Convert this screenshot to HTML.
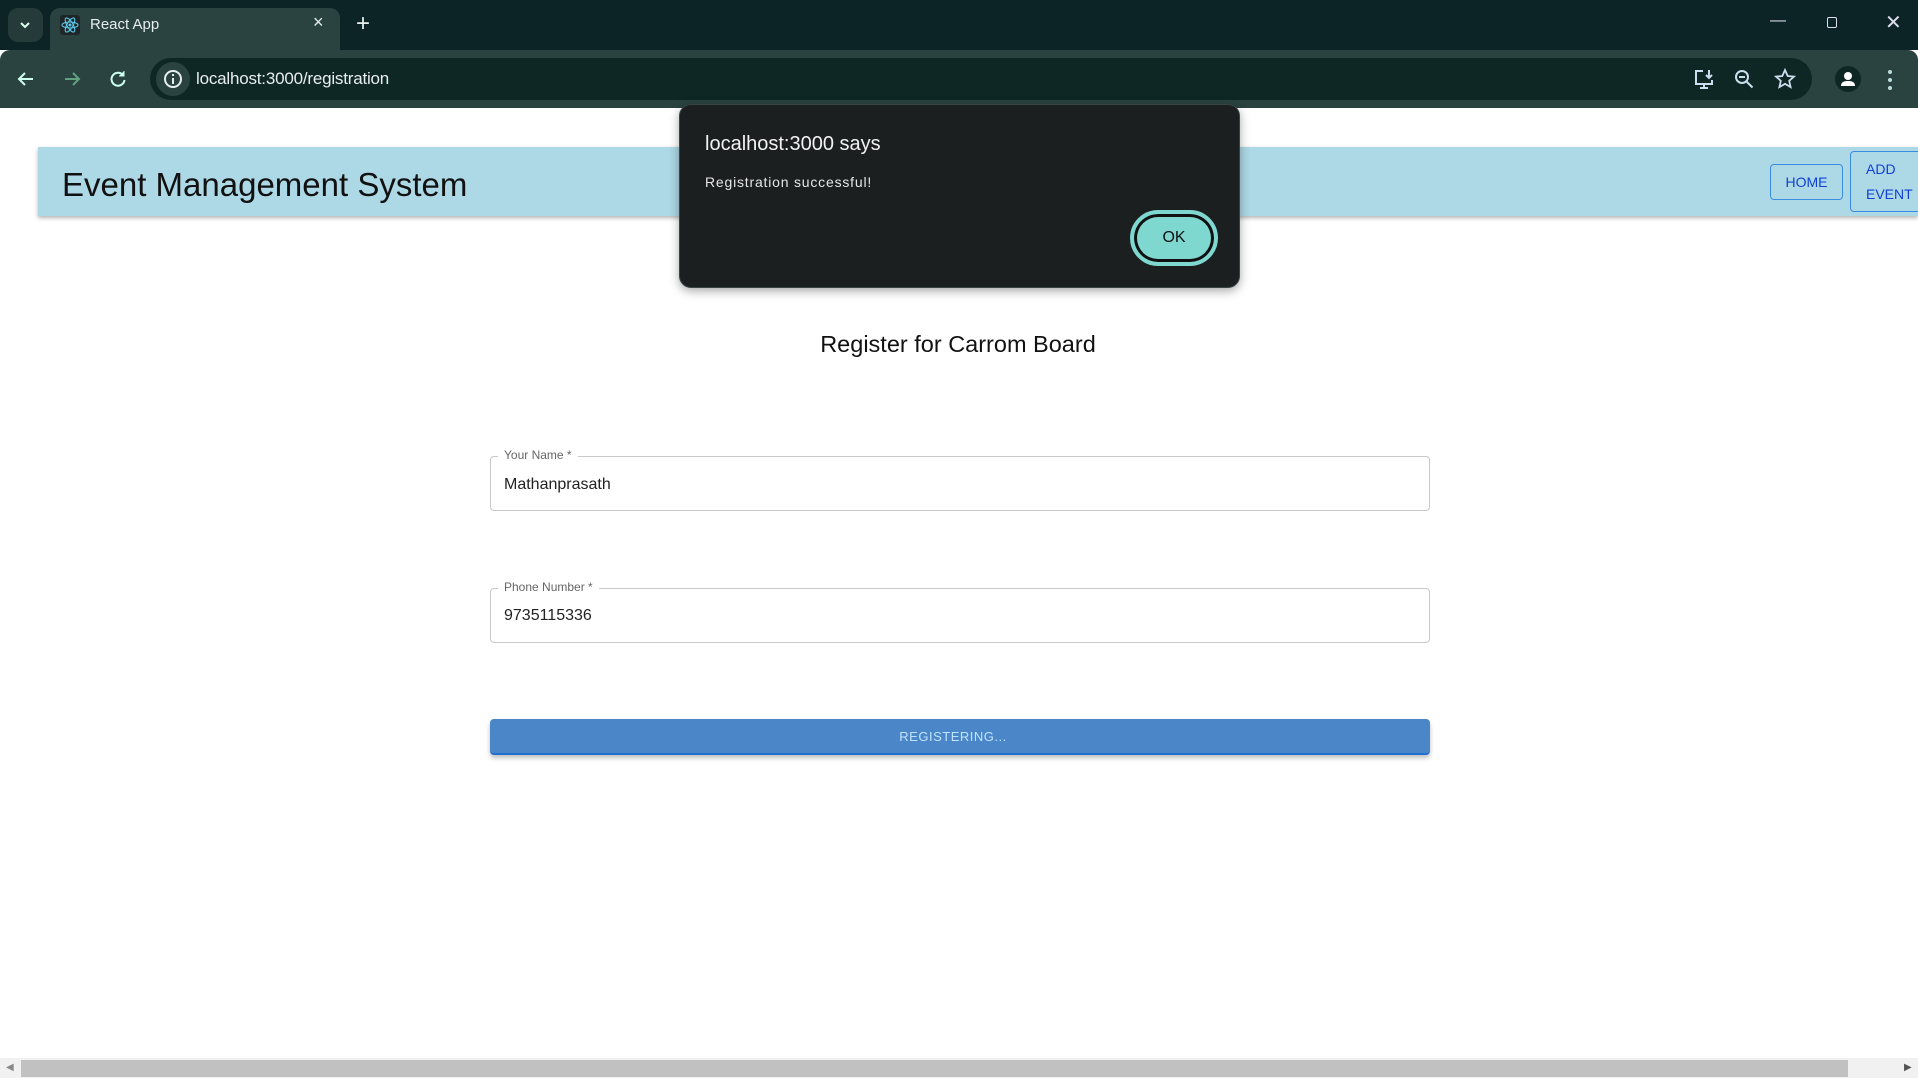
<!DOCTYPE html>
<html><head><meta charset="utf-8"><style>
*{box-sizing:border-box;margin:0;padding:0}
body{width:1918px;height:1078px;overflow:hidden;background:#fff;font-family:"Liberation Sans",sans-serif;position:relative}
.abs{position:absolute}
</style></head><body>
<!-- tab bar -->
<div class="abs" style="left:0;top:0;width:1918px;height:50px;background:#0c2426"></div>
<div class="abs" style="left:8px;top:8px;width:35px;height:34px;border-radius:10px;background:#243b3a"></div>
<svg class="abs" style="left:18px;top:18px" width="14" height="14" viewBox="0 0 14 14"><path d="M3 5l4 4 4-4" stroke="#dfe" stroke-width="2" fill="none"/></svg>
<div class="abs" style="left:50px;top:8px;width:290px;height:46px;border-radius:10px 10px 0 0;background:#2a4240"></div>
<div class="abs" style="left:60px;top:15px;width:20px;height:20px;background:#1e2628;border-radius:3px"></div>
<svg class="abs" style="left:60px;top:15px" width="20" height="20" viewBox="0 0 20 20"><g fill="none" stroke="#5cc8e8" stroke-width="1.1"><ellipse cx="10" cy="10" rx="8" ry="3"/><ellipse cx="10" cy="10" rx="8" ry="3" transform="rotate(60 10 10)"/><ellipse cx="10" cy="10" rx="8" ry="3" transform="rotate(120 10 10)"/></g><circle cx="10" cy="10" r="1.5" fill="#5cc8e8"/></svg>
<div class="abs" style="left:90px;top:16px;color:#e6eeee;font-size:15px">React App</div>
<div class="abs" style="left:313px;top:12px;color:#e6eeee;font-size:18px">×</div>
<div class="abs" style="left:356px;top:10px;color:#e6eeee;font-size:24px;font-weight:300">+</div>
<div class="abs" style="left:1770px;top:12px;color:#dde;font-size:16px">—</div>
<div class="abs" style="left:1827px;top:17px;width:10px;height:11px;border:1.5px solid #dde;border-radius:2px"></div>
<div class="abs" style="left:1885px;top:10px;color:#dde;font-size:20px">✕</div>
<!-- toolbar -->
<div class="abs" style="left:0;top:50px;width:1918px;height:58px;background:#2a4240;border-radius:10px 10px 0 0"></div>
<svg class="abs" style="left:16px;top:69px" width="20" height="20" viewBox="0 0 20 20"><path d="M17 10H4M9 4l-6 6 6 6" stroke="#cfe" stroke-width="2" fill="none"/></svg>
<svg class="abs" style="left:62px;top:69px" width="20" height="20" viewBox="0 0 20 20"><path d="M3 10h13M11 4l6 6-6 6" stroke="#7c9" stroke-width="2" fill="none" opacity=".7"/></svg>
<svg class="abs" style="left:108px;top:69px" width="20" height="20" viewBox="0 0 20 20"><path d="M15 6A6.5 6.5 0 1 0 16.5 11" stroke="#cfe" stroke-width="2" fill="none"/><path d="M16 2v5h-5" fill="#cfe" stroke="#cfe" stroke-width="1"/></svg>
<div class="abs" style="left:150px;top:58px;width:1662px;height:42px;border-radius:21px;background:#0e2624"></div>
<div class="abs" style="left:156px;top:62px;width:34px;height:34px;border-radius:17px;background:#2a4240"></div>
<svg class="abs" style="left:163px;top:69px" width="20" height="20" viewBox="0 0 20 20"><circle cx="10" cy="10" r="8" stroke="#e6eeee" stroke-width="2" fill="none"/><path d="M10 9v6M10 5v2" stroke="#e6eeee" stroke-width="2"/></svg>
<div class="abs" style="left:196px;top:69px;color:#e6eeee;font-size:17px;letter-spacing:-.2px">localhost:3000/registration</div>
<svg class="abs" style="left:1693px;top:69px" width="24" height="22" viewBox="0 0 24 22"><path d="M10 2H3v13h16v-4M7 19h8M11 15v4" stroke="#cde" stroke-width="2" fill="none"/><path d="M16 1v8M13 6l3 3 3-3" stroke="#cde" stroke-width="2" fill="none"/></svg>
<svg class="abs" style="left:1734px;top:69px" width="22" height="22" viewBox="0 0 22 22"><circle cx="8" cy="8" r="6" stroke="#cde" stroke-width="2" fill="none"/><path d="M5 8h6M12.5 12.5l6 6" stroke="#cde" stroke-width="2"/></svg>
<svg class="abs" style="left:1774px;top:68px" width="22" height="22" viewBox="0 0 22 22"><path d="M11 2l2.7 6 6.3.6-4.8 4.2 1.4 6.3L11 15.8 5.4 19.1l1.4-6.3L2 8.6 8.3 8z" stroke="#cde" stroke-width="1.8" fill="none"/></svg>
<div class="abs" style="left:1835px;top:66px;width:26px;height:26px;border-radius:13px;background:#0e2624"></div>
<svg class="abs" style="left:1835px;top:66px" width="26" height="26" viewBox="0 0 26 26"><circle cx="13" cy="10" r="4" fill="#fff"/><path d="M6 20c0-4 3-5 7-5s7 1 7 5z" fill="#fff"/></svg>
<svg class="abs" style="left:1886px;top:69px" width="8" height="22" viewBox="0 0 8 22"><circle cx="4" cy="3" r="2" fill="#bdd"/><circle cx="4" cy="11" r="2" fill="#bdd"/><circle cx="4" cy="19" r="2" fill="#bdd"/></svg>
<!-- header -->
<div class="abs" style="left:38px;top:147px;width:1880px;height:69px;background:#add8e6;box-shadow:0 2px 4px rgba(0,0,0,.3)"></div>
<div class="abs" style="left:62px;top:166px;font-size:33px;color:#111;font-family:'Liberation Sans',sans-serif">Event Management System</div>
<div class="abs" style="left:1770px;top:164px;width:73px;height:36px;border:1px solid #3a8ee0;border-radius:4px;color:#1040d8;font-size:14px;text-align:center;line-height:34px">HOME</div>
<div class="abs" style="left:1850px;top:151px;width:80px;height:61px;border:1px solid #3a8ee0;border-radius:4px;color:#1040d8;font-size:14px;padding:5px 0 0 15px;line-height:25px">ADD<br>EVENT</div>
<!-- title -->
<div class="abs" style="left:0;width:1918px;top:331px;text-align:center;font-size:23.5px;color:#111;padding-right:2px">Register for Carrom Board</div>
<!-- fields -->
<div class="abs" style="left:490px;top:456px;width:940px;height:55px;border:1.5px solid #c8c8c8;border-radius:4px"></div>
<div class="abs" style="left:498px;top:448px;background:#fff;padding:0 6px;font-size:12px;color:#666">Your Name *</div>
<div class="abs" style="left:504px;top:476px;font-size:16px;color:#222">Mathanprasath</div>
<div class="abs" style="left:490px;top:588px;width:940px;height:55px;border:1.5px solid #c8c8c8;border-radius:4px"></div>
<div class="abs" style="left:498px;top:580px;background:#fff;padding:0 6px;font-size:12px;color:#666">Phone Number *</div>
<div class="abs" style="left:504px;top:607px;font-size:16px;color:#222">9735115336</div>
<div class="abs" style="left:490px;top:719px;width:940px;height:36px;background:#4b86c8;border-bottom:2px solid #1f6ed0;border-radius:4px;box-shadow:0 3px 5px rgba(0,0,0,.25);text-align:center;line-height:36px;color:#bfe4ff;font-size:13px;letter-spacing:.5px;padding-right:14px">REGISTERING...</div>
<!-- dialog -->
<div class="abs" style="left:679px;top:104px;width:561px;height:184px;background:#1b1f1f;border:1px solid #3a4444;border-radius:12px;box-shadow:0 3px 10px rgba(0,0,0,.35)"></div>
<div class="abs" style="left:705px;top:133px;color:#f2f2f2;font-size:20px;font-family:'Liberation Sans',sans-serif">localhost:3000 says</div>
<div class="abs" style="left:705px;top:174px;color:#e6e6e6;font-size:14px;font-family:'Liberation Sans',sans-serif;letter-spacing:.8px">Registration successful!</div>
<div class="abs" style="left:1130px;top:210px;width:88px;height:56px;border-radius:28px;background:#7fd8d0;border:4px solid #7fd8d0;box-shadow:inset 0 0 0 3px #111"></div>
<div class="abs" style="left:1130px;top:229px;width:88px;text-align:center;color:#111;font-size:16px">OK</div>
<!-- scrollbar -->
<div class="abs" style="left:0;top:1058px;width:1918px;height:20px;background:#f1f1f1"></div>
<div class="abs" style="left:21px;top:1060px;width:1827px;height:17px;background:#c1c1c1"></div>
<div class="abs" style="left:6px;top:1062px;color:#888;font-size:10px">◀</div>
<div class="abs" style="left:1904px;top:1062px;color:#555;font-size:10px">▶</div>
</body></html>
